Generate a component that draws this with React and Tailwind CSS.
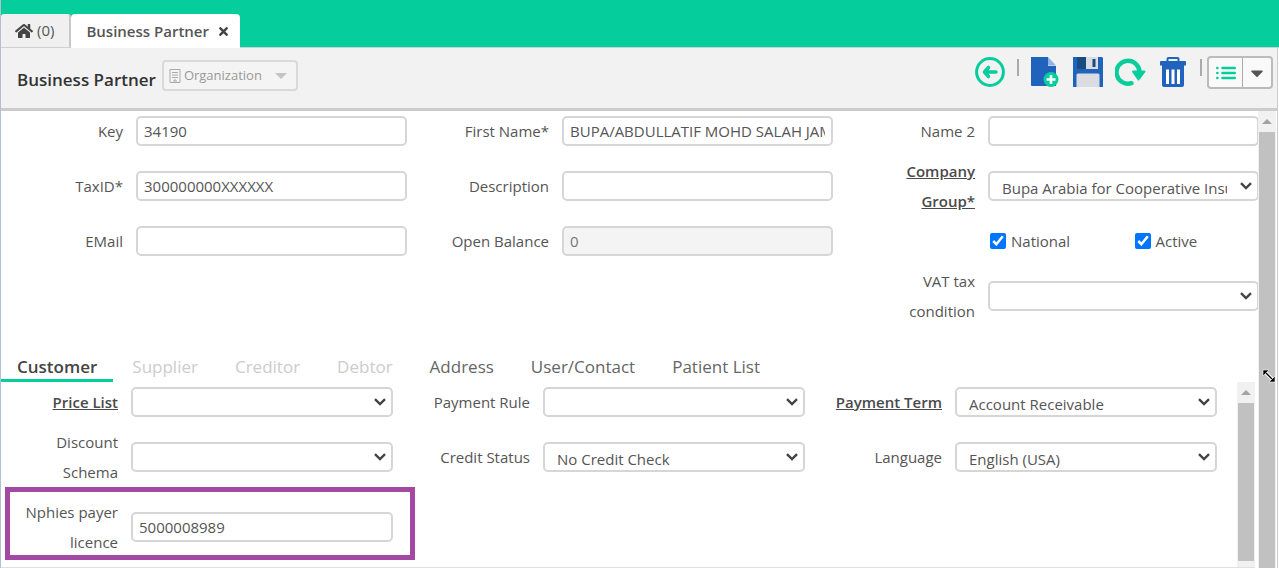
import { FaHome, FaTimes, FaCaretDown } from 'react-icons/fa'

const labelBase = 'shrink-0 text-right text-[15px] leading-[30px]'
const inputBase =
  'h-[30px] w-full min-w-0 rounded-[5px] border-2 border-[#d6d6d6] bg-white text-[15px] text-[#555] outline-none'

function Label({ id, strong, wide, children }) {
  return (
    <label
      htmlFor={id}
      className={`${labelBase} ${wide ? 'w-[117px] pl-[8px]' : 'w-[122px] pl-[15px]'} ${
        strong ? 'font-semibold text-[#4a4a4a] underline' : 'text-[#555]'
      }`}
    >
      {children}
    </label>
  )
}

function Field({ id, label, strong, wide, value = '', disabled, options, highlight }) {
  return (
    <div className="relative flex items-center gap-[13px] py-[5px] pr-[20px]">
      <Label id={id} strong={strong} wide={wide}>{label}</Label>
      {options ? (
        <div className="relative min-w-0 flex-1">
          <select
            id={id}
            defaultValue={options[0]}
            className={`${inputBase} block appearance-none pt-[4px] pr-[30px] pl-[12px]`}
          >
            {options.map(o => <option key={o}>{o}</option>)}
          </select>
          <svg
            className="pointer-events-none absolute top-[11px] right-[7px]"
            width="12" height="8" viewBox="0 0 12 8" fill="none" stroke="#444" strokeWidth="2.4"
          >
            <path d="M1 1.2L6 6L11 1.2" />
          </svg>
        </div>
      ) : (
        <div className="min-w-0 flex-1">
          <input
            id={id}
            type="text"
            defaultValue={value}
            disabled={disabled}
            className={`${inputBase} block px-[6px] disabled:bg-[#f4f4f4] disabled:text-[#777]`}
          />
        </div>
      )}
      {highlight && (
        <div className="pointer-events-none absolute -top-[5px] -right-[2px] bottom-[2px] left-[4px] border-[5px] border-[#a349a4]" />
      )}
    </div>
  )
}

function Check({ id, label }) {
  return (
    <div className="flex flex-1 items-center gap-[5px]">
      <input id={id} type="checkbox" defaultChecked className="size-[16px] accent-[#0075ff]" />
      <label htmlFor={id} className="text-[15px] leading-[30px] text-[#555]">{label}</label>
    </div>
  )
}

function ScrollBar() {
  return (
    <div className="flex w-[18px] shrink-0 flex-col items-center bg-[#f1f1f1]">
      <svg className="my-[8px]" width="10" height="5" viewBox="0 0 10 5" fill="#a3a3a3">
        <path d="M5 0L10 5H0z" />
      </svg>
      <div className="w-[16px] flex-1 bg-[#c1c1c1]" />
    </div>
  )
}

function BackIcon() {
  return (
    <svg width="30" height="30" viewBox="0 0 30 30" fill="none" stroke="#05ce9c">
      <circle cx="15" cy="15" r="13.4" strokeWidth="3" />
      <path d="M13.5 10.5L9.5 15L13.5 19.5M10 15H21" strokeWidth="3.6" strokeLinejoin="round" strokeLinecap="round" />
    </svg>
  )
}

function NewIcon() {
  return (
    <svg width="30" height="30" viewBox="0 0 30 30">
      <path d="M0 0H17V9H25V29H1Q0 29 0 28z" fill="#2063bd" />
      <path d="M17 0L25 8.5H17z" fill="#8db4e6" />
      <circle cx="20" cy="22.5" r="7.5" fill="#05ce9c" />
      <path d="M20 18V27M15.5 22.5H24.5" stroke="#fff" strokeWidth="2.6" />
    </svg>
  )
}

function SaveIcon() {
  return (
    <svg width="30" height="30" viewBox="0 0 30 30">
      <path d="M0 0H29L30 1V30H0z" fill="#2063bd" />
      <path d="M4 0H25V12H4z" fill="#194b80" />
      <path d="M13 0H25V12H13z" fill="#d9dde1" />
      <path d="M19.5 2H22.5V10H19.5z" fill="#194b80" />
      <path d="M3.5 18Q3.5 16.5 5 16.5H25Q26.5 16.5 26.5 18V30H3.5z" fill="#d9dde1" />
    </svg>
  )
}

function RefreshIcon() {
  return (
    <svg width="31" height="30" viewBox="0 0 31 30">
      <path d="M16.5 26.2A11.5 11.5 0 1 1 24.5 15" fill="none" stroke="#05ce9c" strokeWidth="4.4" strokeLinecap="round" />
      <path d="M18 14.5H29.5L23.5 22.5z" fill="#05ce9c" stroke="#05ce9c" strokeWidth="2" strokeLinejoin="round" />
    </svg>
  )
}

function TrashIcon() {
  return (
    <svg width="26" height="30" viewBox="0 0 26 30">
      <path d="M7.5 4V2Q7.5 1 8.5 1H17.5Q18.5 1 18.5 2V4" fill="none" stroke="#2063bd" strokeWidth="2" />
      <path d="M1 4H25Q26 4 26 5V8.5H0V5Q0 4 1 4zM2 8.5H24V28Q24 30 22 30H4Q2 30 2 28z" fill="#2063bd" />
      <path d="M7.5 12.5V27M13 12.5V27M18.5 12.5V27" stroke="#fff" strokeWidth="3" />
    </svg>
  )
}

function ListIcon() {
  return (
    <svg width="20" height="14" viewBox="0 0 20 14" stroke="#05ce9c" strokeWidth="2.6" strokeLinecap="round">
      <path d="M1.3 2H1.4M1.3 7H1.4M1.3 12H1.4M6.5 2H18.7M6.5 7H18.7M6.5 12H18.7" />
    </svg>
  )
}

function Organization() {
  return (
    <button
      type="button"
      disabled
      className="ml-[6px] flex h-[31px] w-[136px] items-center rounded-[4px] border-2 border-[#d9d9d9] bg-[#f4f4f4] px-[5px] text-[13px] text-[#999]"
    >
      <svg width="12" height="14" viewBox="0 0 12 14" fill="none" stroke="#aaa">
        <path d="M1 .5H11V13.5H1zM3 3.5H9M3 6H9M3 8.5H9M5 13V11H7V13" />
      </svg>
      <span className="ml-[3px]">Organization</span>
      <svg className="ml-auto mr-[4px]" width="12" height="6" viewBox="0 0 12 6" fill="#c4c4c4">
        <path d="M0 0H12L6 6z" />
      </svg>
    </button>
  )
}

const tabs = [
  { name: 'Customer', active: true },
  { name: 'Supplier', disabled: true },
  { name: 'Creditor', disabled: true },
  { name: 'Debtor', disabled: true },
  { name: 'Address' },
  { name: 'User/Contact' },
  { name: 'Patient List' },
]

export default function App() {
  return (
    <div className="flex min-h-screen flex-col border-l border-[#b4bfd2] bg-white font-['Open_Sans',sans-serif]">
      {/* Window tabs */}
      <header className="flex h-[48px] items-end border-b border-[#d0d0d0] bg-[#05ce9c]">
        <a href="#home" className="flex h-[33px] items-center gap-[4px] rounded-t-[3px] border-r-2 border-[#c8c8c8] bg-[#f0f0f0] pr-[15px] pl-[14px] text-[15px] text-[#555]">
          <FaHome className="size-[18px] text-[#444]" />
          (0)
        </a>
        <div className="-mb-px flex h-[34px] items-center gap-[8px] rounded-t-[4px] bg-white pr-[10px] pl-[15px]">
          <a href="#partner" className="text-[15px] font-semibold text-[#555]">Business Partner</a>
          <button type="button" aria-label="Close" className="text-[#444]">
            <FaTimes className="size-[13px]" />
          </button>
        </div>
      </header>

      {/* Toolbar */}
      <div className="mr-px flex items-start border-r border-b-[3px] border-[#ccc] bg-[#f2f2f2] pr-[4px] pl-[16px]">
        <h1 className="pt-[20px] pb-[16px] text-[17px] leading-[24px] font-semibold text-[#333]">Business Partner</h1>
        <div className="pt-[12px]">
          <Organization />
        </div>
        <div className="ml-auto flex items-start pt-[8px]">
          <button type="button" aria-label="Back" className="mt-px"><BackIcon /></button>
          <span className="mx-[12px] mt-[3px] h-[17px] w-[2px] bg-[#aaa]" />
          <button type="button" aria-label="New" className="mt-px"><NewIcon /></button>
          <button type="button" aria-label="Save" className="mt-px ml-[12px]"><SaveIcon /></button>
          <button type="button" aria-label="Refresh" className="mt-px ml-[12px]"><RefreshIcon /></button>
          <button type="button" aria-label="Delete" className="mt-px ml-[14px]"><TrashIcon /></button>
          <span className="mr-[5px] ml-[14px] mt-[3px] h-[17px] w-[2px] bg-[#aaa]" />
          <div className="flex h-[33px] rounded-[4px] border-2 border-[#bbb] bg-[#f9f9f9]">
            <button type="button" aria-label="List" className="flex w-[34px] items-center justify-center border-r border-[#aaa]">
              <ListIcon />
            </button>
            <button type="button" aria-label="More" className="flex w-[28px] items-center justify-center">
              <FaCaretDown className="size-[20px] text-[#555]" />
            </button>
          </div>
        </div>
      </div>

      <main className="mr-px flex flex-1 border-r border-[#ccc] pr-px">
        <div className="flex min-w-0 flex-1 flex-col overflow-hidden">
          <form className="-mr-[21px] grid grid-cols-3 items-center">
            <Field id="key" label="Key" value="34190" />
            <Field id="first" label="First Name*" value="BUPA/ABDULLATIF MOHD SALAH JAMEEL" />
            <Field id="name2" label="Name 2" />
            <Field id="tax" label="TaxID*" value="300000000XXXXXX" />
            <Field id="desc" label="Description" />
            <Field id="group" label="Company Group*" strong options={['Bupa Arabia for Cooperative Insurance']} />
            <Field id="email" label="EMail" />
            <Field id="balance" label="Open Balance" value="0" disabled />
            <div className="flex py-[5px] pl-[137px]">
              <Check id="national" label="National" />
              <Check id="active" label="Active" />
            </div>
            <div className="col-start-3">
              <Field id="vat" label="VAT tax condition" options={['']} />
            </div>
          </form>

          <nav className="mt-[20px] flex gap-px">
            {tabs.map(t => (
              <button
                key={t.name}
                type="button"
                disabled={t.disabled}
                className={`h-[31px] border-b-[3px] pt-[3px] text-[17px] leading-[25px] ${
                  t.active
                    ? 'border-[#05ce9c] px-[16px] font-semibold text-[#444]'
                    : t.disabled
                      ? 'border-transparent px-[18px] text-[#ccc]'
                      : 'border-transparent px-[18px] text-[#666]'
                }`}
              >
                {t.name}
              </button>
            ))}
          </nav>

          <section className="mr-[3px] flex flex-1 border-b border-[#e0e0e0]">
            <form className="grid flex-1 grid-cols-3 content-start items-start">
              <Field wide id="price" label="Price List" strong options={['']} />
              <Field wide id="rule" label="Payment Rule" options={['']} />
              <Field wide id="term" label="Payment Term" strong options={['Account Receivable']} />
              <Field wide id="schema" label="Discount Schema" options={['']} />
              <div className="py-[15px]"><Field wide id="credit" label="Credit Status" options={['No Credit Check']} /></div>
              <div className="py-[15px]"><Field wide id="lang" label="Language" options={['English (USA)']} /></div>
              <Field wide id="licence" label="Nphies payer licence" value="5000008989" highlight />
            </form>
            <div className="flex bg-[#f1f1f1] pb-[6px]">
              <ScrollBar />
            </div>
          </section>
        </div>

        <div className="relative flex">
          <ScrollBar />
          {/* Resize cursor */}
          <svg className="absolute top-[258px] left-[4px]" width="14" height="14" viewBox="0 0 14 14" fill="none">
            <path d="M2 2L12 12" stroke="#fff" strokeWidth="3.5" />
            <path d="M2 2L12 12" stroke="#000" strokeWidth="1.3" />
            <path d="M1 1H7L1 7zM13 13H7L13 7z" fill="#000" stroke="#fff" strokeWidth=".6" />
          </svg>
        </div>
      </main>
    </div>
  )
}
